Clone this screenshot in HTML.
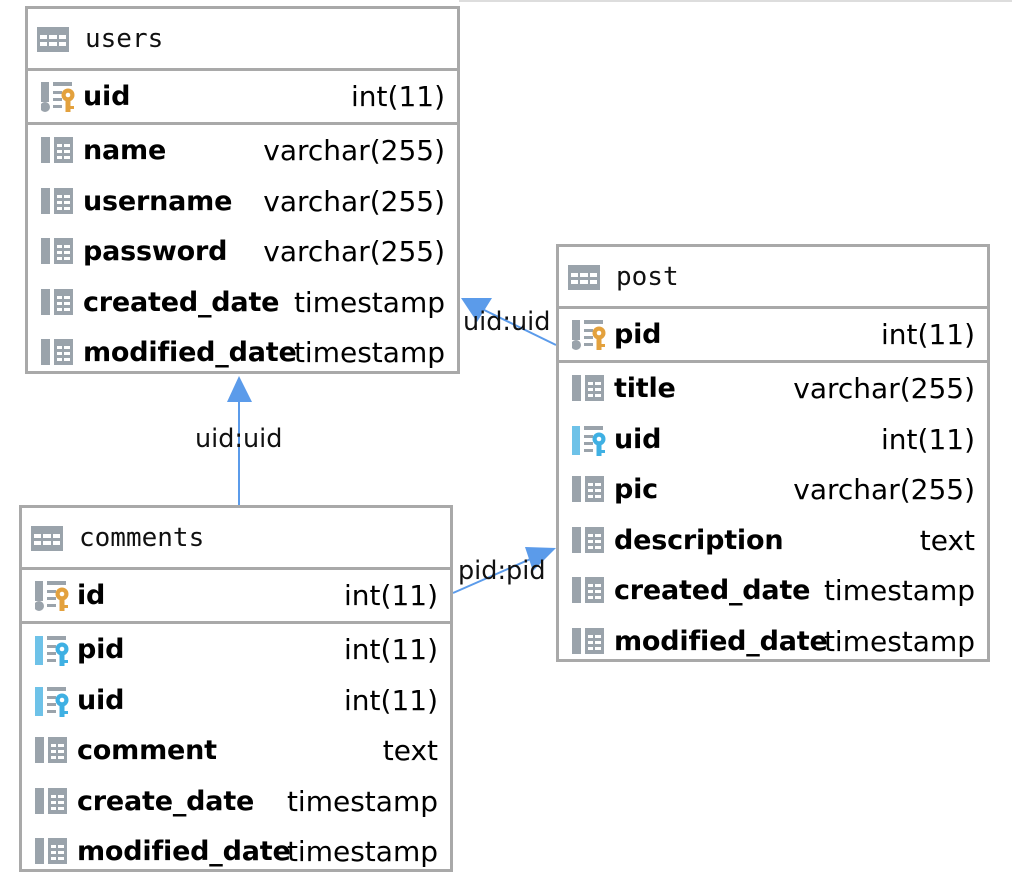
<!DOCTYPE html>
<html><head><meta charset="utf-8"><style>
body{margin:0;width:1012px;height:876px;background:#fff;position:relative;overflow:hidden;font-family:"DejaVu Sans","Liberation Sans",sans-serif}
.t{position:absolute;border:3px solid #a9a9a9;background:#fff;box-sizing:border-box;overflow:hidden}
.h{height:62px;border-bottom:3px solid #a9a9a9;position:relative;box-sizing:border-box}
.h span{position:absolute;left:57px;top:0;line-height:60px;font-family:"DejaVu Sans Mono","Liberation Mono",monospace;font-size:26px;color:#111}
.h svg{position:absolute;left:9px;top:18px}
.r{height:50.5px;position:relative}
.pk{border-bottom:3px solid #a9a9a9;height:54px;box-sizing:border-box}
.r svg{position:absolute;left:13px;top:12px}
.pk svg{top:11px}
.n{position:absolute;left:55px;top:0;line-height:51px;font-weight:bold;font-size:27px;color:#000;letter-spacing:-0.2px}
.pk .n,.pk .ty{line-height:52px}
.ty{position:absolute;right:12px;top:0;line-height:51px;font-size:28px;color:#000}
.lb{position:absolute;font-size:25.5px;color:#111}
</style></head><body>
<div style="position:absolute;left:459px;top:0;width:553px;height:2px;background:#ddd"></div>
<svg width="1012" height="876" style="position:absolute;left:0;top:0">
<line x1="476" y1="306" x2="556" y2="345" stroke="#5b9bea" stroke-width="2"/>
<polygon points="461,298 492,298 477,322" fill="#5b9bea"/>
<line x1="239" y1="505" x2="239" y2="395" stroke="#5b9bea" stroke-width="2"/>
<polygon points="239,376 227,402 252,402" fill="#5b9bea"/>
<line x1="453" y1="593" x2="535" y2="557" stroke="#5b9bea" stroke-width="2"/>
<polygon points="525,547 556,548 533,571" fill="#5b9bea"/>
</svg>
<div class="lb" style="left:463px;top:307px">uid:uid</div>
<div class="lb" style="left:195px;top:424px">uid:uid</div>
<div class="lb" style="left:458px;top:556px">pid:pid</div>

<svg width="0" height="0" style="position:absolute">
<defs>
<g id="tb"><rect x="0" y="0" width="32" height="25" fill="#9aa3ab"/><g fill="#fff"><rect x="3" y="8" width="7" height="4"/><rect x="12" y="8" width="8" height="4"/><rect x="22" y="8" width="7" height="4"/><rect x="3" y="15" width="7" height="4"/><rect x="12" y="15" width="8" height="4"/><rect x="22" y="15" width="7" height="4"/></g></g>
<g id="col"><rect x="0" y="0" width="9" height="26" fill="#9aa3ab"/><rect x="13" y="0" width="19" height="26" fill="#9aa3ab"/><g fill="#fff"><rect x="16" y="7" width="5" height="3"/><rect x="23" y="7" width="6" height="3"/><rect x="16" y="13" width="5" height="3"/><rect x="23" y="13" width="6" height="3"/><rect x="16" y="19" width="5" height="3"/><rect x="23" y="19" width="6" height="3"/></g></g>
<g id="pk"><rect x="0" y="0" width="8" height="20" fill="#9aa3ab"/><circle cx="4" cy="25" r="5" fill="#9aa3ab"/><rect x="12" y="0" width="19" height="4" fill="#9aa3ab"/><rect x="12" y="9" width="9" height="3" fill="#9aa3ab"/><rect x="12" y="16" width="9" height="3" fill="#9aa3ab"/><rect x="12" y="23" width="9" height="3" fill="#9aa3ab"/><circle cx="27" cy="13" r="6.5" fill="#e3a13d"/><circle cx="27" cy="13" r="2.3" fill="#fff"/><rect x="24.5" y="17" width="5" height="13" fill="#e3a13d"/><rect x="29" y="24" width="4" height="3" fill="#e3a13d"/></g>
<g id="fk"><rect x="0" y="0" width="8" height="29" fill="#6ec2e8"/><rect x="12" y="0" width="19" height="4" fill="#9aa3ab"/><rect x="12" y="9" width="9" height="3" fill="#9aa3ab"/><rect x="12" y="16" width="9" height="3" fill="#9aa3ab"/><rect x="12" y="23" width="9" height="3" fill="#9aa3ab"/><circle cx="27" cy="13" r="6.5" fill="#3fb0e3"/><circle cx="27" cy="13" r="2.3" fill="#fff"/><rect x="24.5" y="17" width="5" height="13" fill="#3fb0e3"/><rect x="29" y="24" width="4" height="3" fill="#3fb0e3"/></g>
</defs></svg>

<div class="t" style="left:25px;top:6px;width:435px;height:368px">
<div class="h"><svg width="32" height="25"><use href="#tb"/></svg><span>users</span></div>
<div class="r pk"><svg width="34" height="31"><use href="#pk"/></svg><span class="n">uid</span><span class="ty">int(11)</span></div>
<div class="r"><svg width="34" height="30"><use href="#col"/></svg><span class="n">name</span><span class="ty">varchar(255)</span></div>
<div class="r"><svg width="34" height="30"><use href="#col"/></svg><span class="n">username</span><span class="ty">varchar(255)</span></div>
<div class="r"><svg width="34" height="30"><use href="#col"/></svg><span class="n">password</span><span class="ty">varchar(255)</span></div>
<div class="r"><svg width="34" height="30"><use href="#col"/></svg><span class="n">created_date</span><span class="ty">timestamp</span></div>
<div class="r"><svg width="34" height="30"><use href="#col"/></svg><span class="n">modified_date</span><span class="ty">timestamp</span></div>
</div>

<div class="t" style="left:556px;top:244px;width:434px;height:418px">
<div class="h"><svg width="32" height="25"><use href="#tb"/></svg><span>post</span></div>
<div class="r pk"><svg width="34" height="31"><use href="#pk"/></svg><span class="n">pid</span><span class="ty">int(11)</span></div>
<div class="r"><svg width="34" height="30"><use href="#col"/></svg><span class="n">title</span><span class="ty">varchar(255)</span></div>
<div class="r"><svg width="34" height="30"><use href="#fk"/></svg><span class="n">uid</span><span class="ty">int(11)</span></div>
<div class="r"><svg width="34" height="30"><use href="#col"/></svg><span class="n">pic</span><span class="ty">varchar(255)</span></div>
<div class="r"><svg width="34" height="30"><use href="#col"/></svg><span class="n">description</span><span class="ty">text</span></div>
<div class="r"><svg width="34" height="30"><use href="#col"/></svg><span class="n">created_date</span><span class="ty">timestamp</span></div>
<div class="r"><svg width="34" height="30"><use href="#col"/></svg><span class="n">modified_date</span><span class="ty">timestamp</span></div>
</div>

<div class="t" style="left:19px;top:505px;width:434px;height:367px">
<div class="h"><svg width="32" height="25"><use href="#tb"/></svg><span>comments</span></div>
<div class="r pk"><svg width="34" height="31"><use href="#pk"/></svg><span class="n">id</span><span class="ty">int(11)</span></div>
<div class="r"><svg width="34" height="30"><use href="#fk"/></svg><span class="n">pid</span><span class="ty">int(11)</span></div>
<div class="r"><svg width="34" height="30"><use href="#fk"/></svg><span class="n">uid</span><span class="ty">int(11)</span></div>
<div class="r"><svg width="34" height="30"><use href="#col"/></svg><span class="n">comment</span><span class="ty">text</span></div>
<div class="r"><svg width="34" height="30"><use href="#col"/></svg><span class="n">create_date</span><span class="ty">timestamp</span></div>
<div class="r"><svg width="34" height="30"><use href="#col"/></svg><span class="n">modified_date</span><span class="ty">timestamp</span></div>
</div>
</body></html>
